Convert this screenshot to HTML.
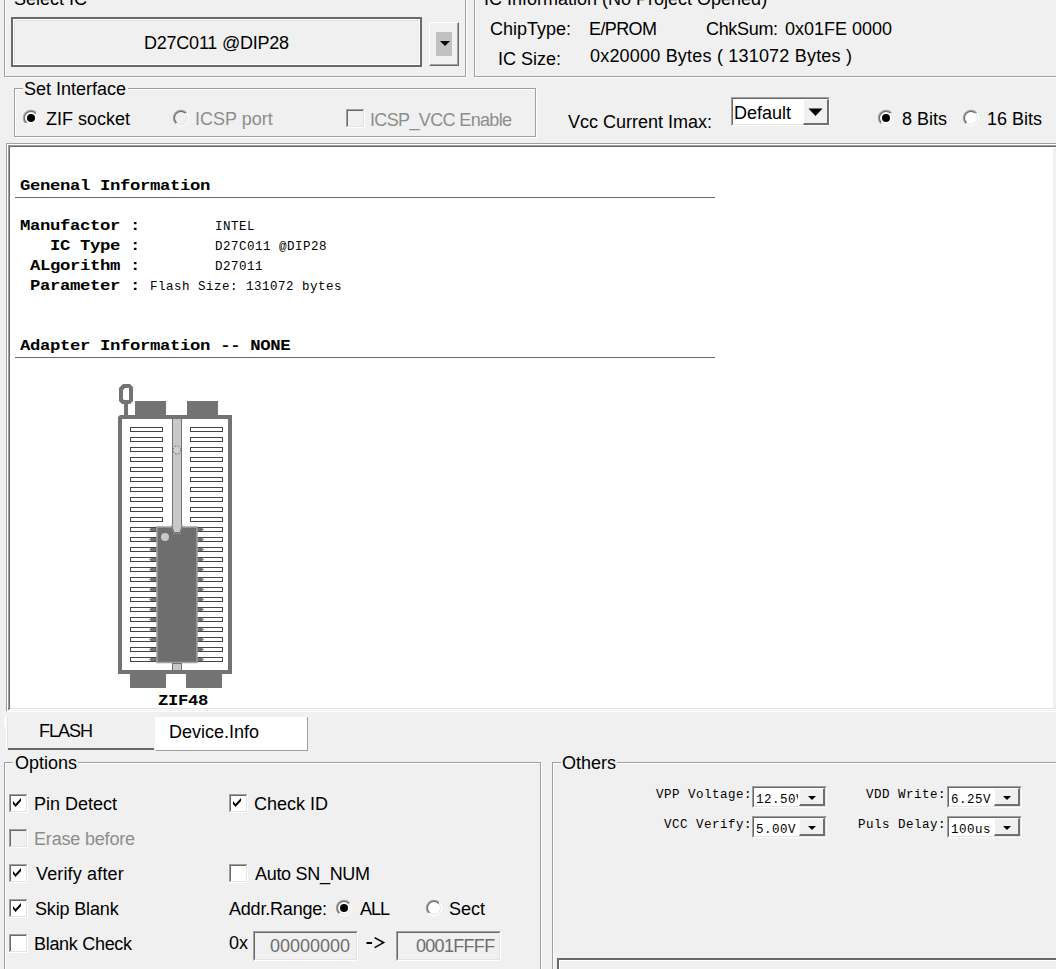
<!DOCTYPE html>
<html><head><meta charset="utf-8"><title>IC Programmer</title>
<style>
html,body{margin:0;padding:0}
html{background:#f0f0f0}
body{width:1056px;height:969px;overflow:hidden;background:#f0f0f0;position:relative;font-family:"Liberation Sans", sans-serif;font-size:17px;color:#000}
.t{position:absolute;white-space:pre;line-height:20px}
.r{position:absolute;display:block}
</style></head><body>

<div class="r" style="left:5px;top:-5px;width:462px;height:83px;border:1px solid #fff;box-sizing:border-box"></div>
<div class="r" style="left:4px;top:-6px;width:462px;height:83px;border:1px solid #a0a0a0;box-sizing:border-box"></div>
<div class="r" style="left:13px;top:-12px;width:74px;height:20px;background:#f0f0f0"></div>
<div class="t" style="left:14px;top:-11px;font-size:18px;">Select IC</div>
<div class="r" style="left:11px;top:17px;width:411px;height:50px;border:2px solid #696969;box-sizing:border-box;background:#f0f0f0"></div>
<div class="r" style="left:13px;top:19px;width:407px;height:46px;border:1px solid #fff;box-sizing:border-box"></div>
<div class="r" style="left:14px;top:20px;width:405px;height:44px;border-left:1px solid #e3e3e3;border-top:1px solid #e3e3e3;box-sizing:border-box"></div>
<div class="t" style="left:144px;top:33px;font-size:18px;letter-spacing:-0.23px;">D27C011 @DIP28</div>
<div class="r" style="left:429px;top:22px;width:30px;height:44px;background:#f0f0f0;border-left:1px solid #fff;border-top:1px solid #fff;border-right:1px solid #696969;border-bottom:1px solid #696969;box-sizing:border-box"></div>
<div class="r" style="left:430px;top:23px;width:28px;height:42px;border-right:1px solid #a0a0a0;border-bottom:1px solid #a0a0a0;box-sizing:border-box"></div>
<div class="r" style="left:436px;top:32px;width:16px;height:24px;background:#c0c0c0"></div>
<svg class="r" style="left:439px;top:40px" width="12" height="7"><path d="M1 1 H11 L6 6 Z" fill="#000"/></svg>
<div class="r" style="left:475px;top:-5px;width:596px;height:83px;border:1px solid #fff;box-sizing:border-box"></div>
<div class="r" style="left:474px;top:-6px;width:596px;height:83px;border:1px solid #a0a0a0;box-sizing:border-box"></div>
<div class="r" style="left:483px;top:-12px;width:288px;height:20px;background:#f0f0f0"></div>
<div class="t" style="left:484px;top:-11px;font-size:18px;">IC Information (No Project Opened)</div>
<div class="t" style="left:490px;top:19px;font-size:18px;">ChipType:</div>
<div class="t" style="left:589px;top:19px;font-size:18px;letter-spacing:-0.6px;">E/PROM</div>
<div class="t" style="left:706px;top:19px;font-size:18px;letter-spacing:-0.33px;">ChkSum:</div>
<div class="t" style="left:785px;top:19px;font-size:18px;">0x01FE 0000</div>
<div class="t" style="left:498px;top:49px;font-size:18px;">IC Size:</div>
<div class="t" style="left:590px;top:46px;font-size:18px;letter-spacing:0.2px;">0x20000 Bytes ( 131072 Bytes )</div>
<div class="r" style="left:15px;top:89px;width:522px;height:49px;border:1px solid #fff;box-sizing:border-box"></div>
<div class="r" style="left:14px;top:88px;width:522px;height:49px;border:1px solid #a0a0a0;box-sizing:border-box"></div>
<div class="r" style="left:23px;top:80px;width:105px;height:20px;background:#f0f0f0"></div>
<div class="t" style="left:24px;top:79px;font-size:18px;">Set Interface</div>
<svg class="r" style="left:22px;top:109px" width="18" height="18"><defs><linearGradient id="g31118" x1="0" y1="0" x2="1" y2="1"><stop offset="0.5" stop-color="#a0a0a0"/><stop offset="0.5" stop-color="#fff"/></linearGradient><linearGradient id="h31118" x1="0" y1="0" x2="1" y2="1"><stop offset="0.5" stop-color="#696969"/><stop offset="0.5" stop-color="#e3e3e3"/></linearGradient></defs><circle cx="9" cy="9" r="8.2" fill="url(#g31118)"/><circle cx="9" cy="9" r="7" fill="url(#h31118)"/><circle cx="9" cy="9" r="6" fill="#fff"/><circle cx="9" cy="9" r="4" fill="#000"/></svg>
<div class="t" style="left:46px;top:109px;font-size:18px;">ZIF socket</div>
<svg class="r" style="left:172px;top:109px" width="18" height="18"><defs><linearGradient id="g181118" x1="0" y1="0" x2="1" y2="1"><stop offset="0.5" stop-color="#a0a0a0"/><stop offset="0.5" stop-color="#fff"/></linearGradient><linearGradient id="h181118" x1="0" y1="0" x2="1" y2="1"><stop offset="0.5" stop-color="#696969"/><stop offset="0.5" stop-color="#e3e3e3"/></linearGradient></defs><circle cx="9" cy="9" r="8.2" fill="url(#g181118)"/><circle cx="9" cy="9" r="7" fill="url(#h181118)"/><circle cx="9" cy="9" r="6" fill="#f0f0f0"/></svg>
<div class="t" style="left:195px;top:109px;font-size:18px;color:#8d8d8d;">ICSP port</div>
<svg class="r" style="left:346px;top:109px" width="19" height="19" shape-rendering="crispEdges"><rect x="0" y="0" width="19" height="19" fill="#fff"/><rect x="0" y="0" width="18" height="18" fill="#a0a0a0"/><rect x="1" y="1" width="17" height="17" fill="#e3e3e3"/><rect x="1" y="1" width="16" height="16" fill="#696969"/><rect x="2" y="2" width="15" height="15" fill="#f0f0f0"/></svg>
<div class="t" style="left:370px;top:110px;font-size:18px;color:#8d8d8d;letter-spacing:-0.64px;">ICSP_VCC Enable</div>
<div class="t" style="left:568px;top:112px;font-size:18px;">Vcc Current Imax:</div>
<div class="r" style="left:731px;top:97px;width:99px;height:29px;background:#fff;border-left:1px solid #a0a0a0;border-top:1px solid #a0a0a0;border-right:1px solid #fff;border-bottom:1px solid #fff;box-sizing:border-box"></div>
<div class="r" style="left:732px;top:98px;width:97px;height:27px;border-left:1px solid #696969;border-top:1px solid #696969;border-right:1px solid #e3e3e3;border-bottom:1px solid #e3e3e3;box-sizing:border-box"></div>
<div class="r" style="left:803px;top:99px;width:26px;height:26px;background:#f0f0f0;border-left:1px solid #fff;border-top:1px solid #fff;border-right:2px solid #707070;border-bottom:2px solid #707070;box-sizing:border-box"></div>
<svg class="r" style="left:808px;top:108px" width="15" height="9"><path d="M0.5 0.5 H14.5 L7.5 8 Z" fill="#000"/></svg>
<div class="t" style="left:734px;top:103px;font-size:18px;">Default</div>
<svg class="r" style="left:877px;top:109px" width="18" height="18"><defs><linearGradient id="g886118" x1="0" y1="0" x2="1" y2="1"><stop offset="0.5" stop-color="#a0a0a0"/><stop offset="0.5" stop-color="#fff"/></linearGradient><linearGradient id="h886118" x1="0" y1="0" x2="1" y2="1"><stop offset="0.5" stop-color="#696969"/><stop offset="0.5" stop-color="#e3e3e3"/></linearGradient></defs><circle cx="9" cy="9" r="8.2" fill="url(#g886118)"/><circle cx="9" cy="9" r="7" fill="url(#h886118)"/><circle cx="9" cy="9" r="6" fill="#fff"/><circle cx="9" cy="9" r="4" fill="#000"/></svg>
<div class="t" style="left:902px;top:109px;font-size:18px;">8 Bits</div>
<svg class="r" style="left:962px;top:109px" width="18" height="18"><defs><linearGradient id="g971118" x1="0" y1="0" x2="1" y2="1"><stop offset="0.5" stop-color="#a0a0a0"/><stop offset="0.5" stop-color="#fff"/></linearGradient><linearGradient id="h971118" x1="0" y1="0" x2="1" y2="1"><stop offset="0.5" stop-color="#696969"/><stop offset="0.5" stop-color="#e3e3e3"/></linearGradient></defs><circle cx="9" cy="9" r="8.2" fill="url(#g971118)"/><circle cx="9" cy="9" r="7" fill="url(#h971118)"/><circle cx="9" cy="9" r="6" fill="#fff"/></svg>
<div class="t" style="left:987px;top:109px;font-size:18px;">16 Bits</div>
<div class="r" style="left:6px;top:143px;width:1060px;height:569px;border-left:1px solid #a0a0a0;border-top:1px solid #a0a0a0;border-bottom:1px solid #fff;box-sizing:border-box"></div>
<div class="r" style="left:8px;top:145px;width:1060px;height:565px;background:#fff;border-left:2px solid #696969;border-top:2px solid #696969;border-bottom:1px solid #fff;box-sizing:border-box"></div>
<div class="r" style="left:10px;top:708px;width:1060px;height:1px;background:#e3e3e3"></div>
<div class="r" style="left:7px;top:144px;width:1060px;height:1px;background:#fff"></div>
<div class="r" style="left:7px;top:144px;width:1px;height:566px;background:#fff"></div>
<div class="r" style="left:8px;top:145px;width:1060px;height:1px;background:#a0a0a0"></div>
<div class="r" style="left:8px;top:145px;width:1px;height:563px;background:#a0a0a0"></div>
<div class="r" style="left:1053px;top:148px;width:10px;height:560px;background:#f0f0f0"></div>
<div class="t" style="left:20px;top:177px;font-size:15px;font-family:'Liberation Mono', monospace;font-weight:700;letter-spacing:-0.3px;transform:scaleX(1.15);transform-origin:0 0">Genenal Information</div>
<div class="r" style="left:15px;top:197px;width:700px;height:1px;background:#696969"></div>
<div class="t" style="left:20px;top:217px;font-size:15px;font-family:'Liberation Mono', monospace;font-weight:700;letter-spacing:-0.3px;transform:scaleX(1.15);transform-origin:0 0">Manufactor :</div>
<div class="t" style="left:20px;top:237px;font-size:15px;font-family:'Liberation Mono', monospace;font-weight:700;letter-spacing:-0.3px;transform:scaleX(1.15);transform-origin:0 0">   IC Type :</div>
<div class="t" style="left:20px;top:257px;font-size:15px;font-family:'Liberation Mono', monospace;font-weight:700;letter-spacing:-0.3px;transform:scaleX(1.15);transform-origin:0 0"> ALgorithm :</div>
<div class="t" style="left:20px;top:277px;font-size:15px;font-family:'Liberation Mono', monospace;font-weight:700;letter-spacing:-0.3px;transform:scaleX(1.15);transform-origin:0 0"> Parameter :</div>
<div class="t" style="left:215px;top:216.5px;font-size:12.5px;font-family:'Liberation Mono', monospace;letter-spacing:0.5px;">INTEL</div>
<div class="t" style="left:215px;top:236.5px;font-size:12.5px;font-family:'Liberation Mono', monospace;letter-spacing:0.5px;">D27C011 @DIP28</div>
<div class="t" style="left:215px;top:256.5px;font-size:12.5px;font-family:'Liberation Mono', monospace;letter-spacing:0.5px;">D27011</div>
<div class="t" style="left:150px;top:276.5px;font-size:12.5px;font-family:'Liberation Mono', monospace;letter-spacing:0.5px;">Flash Size: 131072 bytes</div>
<div class="t" style="left:20px;top:337px;font-size:15px;font-family:'Liberation Mono', monospace;font-weight:700;letter-spacing:-0.3px;transform:scaleX(1.15);transform-origin:0 0">Adapter Information -- NONE</div>
<div class="r" style="left:15px;top:357px;width:700px;height:1px;background:#696969"></div>
<svg class="r" style="left:110px;top:380px" width="130" height="312" viewBox="110 380 130 312"><path fill-rule="evenodd" fill="#737373" d="M123 384 H130 L133 387 V401 L130 404 H122 L119 401 V388 Z M125 388 H129 V400 H124 L123 399 V390 Z"/><rect x="124" y="403" width="4" height="13" fill="#737373"/><rect x="135" y="401" width="31" height="15" fill="#737373"/><rect x="187" y="401" width="31" height="15" fill="#737373"/><path fill-rule="evenodd" fill="#737373" d="M120 415 H232 V674 H118 V417 Z M122 419 V670 H228 V419 Z"/><rect x="122" y="419" width="106" height="251" fill="#fff"/><rect x="130" y="674" width="36" height="14" fill="#737373"/><rect x="186" y="674" width="36" height="14" fill="#737373"/><rect x="172.5" y="418.5" width="9" height="252" fill="#c8c8c8" stroke="#737373" stroke-width="1"/><circle cx="177" cy="450" r="4" fill="#d0d0d0" stroke="#606060" stroke-width="1" stroke-dasharray="1.6 1.6"/><rect x="130.5" y="427.5" width="32" height="4" fill="#fff" stroke="#444" stroke-width="1"/><rect x="190.5" y="427.5" width="32" height="4" fill="#fff" stroke="#444" stroke-width="1"/><rect x="130.5" y="437.5" width="32" height="4" fill="#fff" stroke="#444" stroke-width="1"/><rect x="190.5" y="437.5" width="32" height="4" fill="#fff" stroke="#444" stroke-width="1"/><rect x="130.5" y="447.5" width="32" height="4" fill="#fff" stroke="#444" stroke-width="1"/><rect x="190.5" y="447.5" width="32" height="4" fill="#fff" stroke="#444" stroke-width="1"/><rect x="130.5" y="457.5" width="32" height="4" fill="#fff" stroke="#444" stroke-width="1"/><rect x="190.5" y="457.5" width="32" height="4" fill="#fff" stroke="#444" stroke-width="1"/><rect x="130.5" y="467.5" width="32" height="4" fill="#fff" stroke="#444" stroke-width="1"/><rect x="190.5" y="467.5" width="32" height="4" fill="#fff" stroke="#444" stroke-width="1"/><rect x="130.5" y="477.5" width="32" height="4" fill="#fff" stroke="#444" stroke-width="1"/><rect x="190.5" y="477.5" width="32" height="4" fill="#fff" stroke="#444" stroke-width="1"/><rect x="130.5" y="487.5" width="32" height="4" fill="#fff" stroke="#444" stroke-width="1"/><rect x="190.5" y="487.5" width="32" height="4" fill="#fff" stroke="#444" stroke-width="1"/><rect x="130.5" y="497.5" width="32" height="4" fill="#fff" stroke="#444" stroke-width="1"/><rect x="190.5" y="497.5" width="32" height="4" fill="#fff" stroke="#444" stroke-width="1"/><rect x="130.5" y="507.5" width="32" height="4" fill="#fff" stroke="#444" stroke-width="1"/><rect x="190.5" y="507.5" width="32" height="4" fill="#fff" stroke="#444" stroke-width="1"/><rect x="130.5" y="517.5" width="32" height="4" fill="#fff" stroke="#444" stroke-width="1"/><rect x="190.5" y="517.5" width="32" height="4" fill="#fff" stroke="#444" stroke-width="1"/><rect x="130.5" y="527.5" width="32" height="4" fill="#fff" stroke="#444" stroke-width="1"/><rect x="190.5" y="527.5" width="32" height="4" fill="#fff" stroke="#444" stroke-width="1"/><rect x="130.5" y="537.5" width="32" height="4" fill="#fff" stroke="#444" stroke-width="1"/><rect x="190.5" y="537.5" width="32" height="4" fill="#fff" stroke="#444" stroke-width="1"/><rect x="130.5" y="547.5" width="32" height="4" fill="#fff" stroke="#444" stroke-width="1"/><rect x="190.5" y="547.5" width="32" height="4" fill="#fff" stroke="#444" stroke-width="1"/><rect x="130.5" y="557.5" width="32" height="4" fill="#fff" stroke="#444" stroke-width="1"/><rect x="190.5" y="557.5" width="32" height="4" fill="#fff" stroke="#444" stroke-width="1"/><rect x="130.5" y="567.5" width="32" height="4" fill="#fff" stroke="#444" stroke-width="1"/><rect x="190.5" y="567.5" width="32" height="4" fill="#fff" stroke="#444" stroke-width="1"/><rect x="130.5" y="577.5" width="32" height="4" fill="#fff" stroke="#444" stroke-width="1"/><rect x="190.5" y="577.5" width="32" height="4" fill="#fff" stroke="#444" stroke-width="1"/><rect x="130.5" y="587.5" width="32" height="4" fill="#fff" stroke="#444" stroke-width="1"/><rect x="190.5" y="587.5" width="32" height="4" fill="#fff" stroke="#444" stroke-width="1"/><rect x="130.5" y="597.5" width="32" height="4" fill="#fff" stroke="#444" stroke-width="1"/><rect x="190.5" y="597.5" width="32" height="4" fill="#fff" stroke="#444" stroke-width="1"/><rect x="130.5" y="607.5" width="32" height="4" fill="#fff" stroke="#444" stroke-width="1"/><rect x="190.5" y="607.5" width="32" height="4" fill="#fff" stroke="#444" stroke-width="1"/><rect x="130.5" y="617.5" width="32" height="4" fill="#fff" stroke="#444" stroke-width="1"/><rect x="190.5" y="617.5" width="32" height="4" fill="#fff" stroke="#444" stroke-width="1"/><rect x="130.5" y="627.5" width="32" height="4" fill="#fff" stroke="#444" stroke-width="1"/><rect x="190.5" y="627.5" width="32" height="4" fill="#fff" stroke="#444" stroke-width="1"/><rect x="130.5" y="637.5" width="32" height="4" fill="#fff" stroke="#444" stroke-width="1"/><rect x="190.5" y="637.5" width="32" height="4" fill="#fff" stroke="#444" stroke-width="1"/><rect x="130.5" y="647.5" width="32" height="4" fill="#fff" stroke="#444" stroke-width="1"/><rect x="190.5" y="647.5" width="32" height="4" fill="#fff" stroke="#444" stroke-width="1"/><rect x="130.5" y="657.5" width="32" height="4" fill="#fff" stroke="#444" stroke-width="1"/><rect x="190.5" y="657.5" width="32" height="4" fill="#fff" stroke="#444" stroke-width="1"/><path d="M151 528 H157 V531 H151 L149 529.5 Z" fill="#737373"/><path d="M197 528 H202 L204 529.5 L202 531 H197 Z" fill="#737373"/><path d="M151 538 H157 V541 H151 L149 539.5 Z" fill="#737373"/><path d="M197 538 H202 L204 539.5 L202 541 H197 Z" fill="#737373"/><path d="M151 548 H157 V551 H151 L149 549.5 Z" fill="#737373"/><path d="M197 548 H202 L204 549.5 L202 551 H197 Z" fill="#737373"/><path d="M151 558 H157 V561 H151 L149 559.5 Z" fill="#737373"/><path d="M197 558 H202 L204 559.5 L202 561 H197 Z" fill="#737373"/><path d="M151 568 H157 V571 H151 L149 569.5 Z" fill="#737373"/><path d="M197 568 H202 L204 569.5 L202 571 H197 Z" fill="#737373"/><path d="M151 578 H157 V581 H151 L149 579.5 Z" fill="#737373"/><path d="M197 578 H202 L204 579.5 L202 581 H197 Z" fill="#737373"/><path d="M151 588 H157 V591 H151 L149 589.5 Z" fill="#737373"/><path d="M197 588 H202 L204 589.5 L202 591 H197 Z" fill="#737373"/><path d="M151 598 H157 V601 H151 L149 599.5 Z" fill="#737373"/><path d="M197 598 H202 L204 599.5 L202 601 H197 Z" fill="#737373"/><path d="M151 608 H157 V611 H151 L149 609.5 Z" fill="#737373"/><path d="M197 608 H202 L204 609.5 L202 611 H197 Z" fill="#737373"/><path d="M151 618 H157 V621 H151 L149 619.5 Z" fill="#737373"/><path d="M197 618 H202 L204 619.5 L202 621 H197 Z" fill="#737373"/><path d="M151 628 H157 V631 H151 L149 629.5 Z" fill="#737373"/><path d="M197 628 H202 L204 629.5 L202 631 H197 Z" fill="#737373"/><path d="M151 638 H157 V641 H151 L149 639.5 Z" fill="#737373"/><path d="M197 638 H202 L204 639.5 L202 641 H197 Z" fill="#737373"/><path d="M151 648 H157 V651 H151 L149 649.5 Z" fill="#737373"/><path d="M197 648 H202 L204 649.5 L202 651 H197 Z" fill="#737373"/><path d="M151 658 H157 V661 H151 L149 659.5 Z" fill="#737373"/><path d="M197 658 H202 L204 659.5 L202 661 H197 Z" fill="#737373"/><rect x="157" y="527" width="40" height="135.5" fill="#6e6e6e" stroke="#a0a0a0" stroke-width="1.5"/><path d="M171 526 L173 531.5 V533.5 H181 V531.5 L183 526" fill="#a0a0a0"/><path d="M172 525 V526 L173.5 531 V532.5 H180.5 V531 L182 526 V525" fill="#c8c8c8" stroke="#737373" stroke-width="1"/><circle cx="165" cy="537" r="4" fill="#c8c8c8"/><rect x="172.5" y="663.5" width="9" height="7" fill="#c8c8c8" stroke="#737373" stroke-width="1"/></svg>
<div class="t" style="left:158px;top:692px;font-size:15px;font-family:'Liberation Mono', monospace;font-weight:700;letter-spacing:-0.3px;transform:scaleX(1.15);transform-origin:0 0">ZIF48</div>
<div class="r" style="left:4px;top:711px;width:1060px;height:1px;background:#fff"></div>
<div class="r" style="left:4px;top:717px;width:2px;height:10px;background:#fff"></div>
<div class="r" style="left:6px;top:717px;width:1px;height:31px;background:#fff"></div>
<div class="r" style="left:7px;top:717px;width:1px;height:31px;background:#e3e3e3"></div>
<div class="r" style="left:8px;top:748px;width:146px;height:2px;background:#696969"></div>
<div class="t" style="left:39px;top:721px;font-size:18px;letter-spacing:-1px;">FLASH</div>
<div class="r" style="left:155px;top:717px;width:153px;height:34px;background:#fff;border-left:1px solid #fff;border-right:1px solid #a0a0a0;border-bottom:1px solid #a0a0a0;box-sizing:border-box"></div>
<div class="t" style="left:169px;top:722px;font-size:18px;">Device.Info</div>
<div class="r" style="left:5px;top:763px;width:537px;height:218px;border:1px solid #fff;box-sizing:border-box"></div>
<div class="r" style="left:4px;top:762px;width:537px;height:218px;border:1px solid #a0a0a0;box-sizing:border-box"></div>
<div class="r" style="left:13px;top:752px;width:65px;height:20px;background:#f0f0f0"></div>
<div class="t" style="left:15px;top:753px;font-size:18px;">Options</div>
<svg class="r" style="left:9px;top:794px" width="19" height="19" shape-rendering="crispEdges"><rect x="0" y="0" width="19" height="19" fill="#fff"/><rect x="0" y="0" width="18" height="18" fill="#a0a0a0"/><rect x="1" y="1" width="17" height="17" fill="#e3e3e3"/><rect x="1" y="1" width="16" height="16" fill="#696969"/><rect x="2" y="2" width="15" height="15" fill="#fff"/><path d="M4 7 L6.5 10 L12 4 L12 7 L6.5 13 L4 10 Z" fill="#000" shape-rendering="auto"/></svg>
<div class="t" style="left:34px;top:794px;font-size:18px;">Pin Detect</div>
<svg class="r" style="left:9px;top:829px" width="19" height="19" shape-rendering="crispEdges"><rect x="0" y="0" width="19" height="19" fill="#fff"/><rect x="0" y="0" width="18" height="18" fill="#a0a0a0"/><rect x="1" y="1" width="17" height="17" fill="#e3e3e3"/><rect x="1" y="1" width="16" height="16" fill="#696969"/><rect x="2" y="2" width="15" height="15" fill="#f0f0f0"/></svg>
<div class="t" style="left:34px;top:829px;font-size:18px;color:#8d8d8d;letter-spacing:-0.18px;">Erase before</div>
<svg class="r" style="left:9px;top:864px" width="19" height="19" shape-rendering="crispEdges"><rect x="0" y="0" width="19" height="19" fill="#fff"/><rect x="0" y="0" width="18" height="18" fill="#a0a0a0"/><rect x="1" y="1" width="17" height="17" fill="#e3e3e3"/><rect x="1" y="1" width="16" height="16" fill="#696969"/><rect x="2" y="2" width="15" height="15" fill="#fff"/><path d="M4 7 L6.5 10 L12 4 L12 7 L6.5 13 L4 10 Z" fill="#000" shape-rendering="auto"/></svg>
<div class="t" style="left:36px;top:864px;font-size:18px;letter-spacing:0.15px;">Verify after</div>
<svg class="r" style="left:9px;top:899px" width="19" height="19" shape-rendering="crispEdges"><rect x="0" y="0" width="19" height="19" fill="#fff"/><rect x="0" y="0" width="18" height="18" fill="#a0a0a0"/><rect x="1" y="1" width="17" height="17" fill="#e3e3e3"/><rect x="1" y="1" width="16" height="16" fill="#696969"/><rect x="2" y="2" width="15" height="15" fill="#fff"/><path d="M4 7 L6.5 10 L12 4 L12 7 L6.5 13 L4 10 Z" fill="#000" shape-rendering="auto"/></svg>
<div class="t" style="left:35px;top:899px;font-size:18px;letter-spacing:-0.15px;">Skip Blank</div>
<svg class="r" style="left:9px;top:934px" width="19" height="19" shape-rendering="crispEdges"><rect x="0" y="0" width="19" height="19" fill="#fff"/><rect x="0" y="0" width="18" height="18" fill="#a0a0a0"/><rect x="1" y="1" width="17" height="17" fill="#e3e3e3"/><rect x="1" y="1" width="16" height="16" fill="#696969"/><rect x="2" y="2" width="15" height="15" fill="#fff"/></svg>
<div class="t" style="left:34px;top:934px;font-size:18px;letter-spacing:-0.3px;">Blank Check</div>
<svg class="r" style="left:229px;top:794px" width="19" height="19" shape-rendering="crispEdges"><rect x="0" y="0" width="19" height="19" fill="#fff"/><rect x="0" y="0" width="18" height="18" fill="#a0a0a0"/><rect x="1" y="1" width="17" height="17" fill="#e3e3e3"/><rect x="1" y="1" width="16" height="16" fill="#696969"/><rect x="2" y="2" width="15" height="15" fill="#fff"/><path d="M4 7 L6.5 10 L12 4 L12 7 L6.5 13 L4 10 Z" fill="#000" shape-rendering="auto"/></svg>
<div class="t" style="left:254px;top:794px;font-size:18px;">Check ID</div>
<svg class="r" style="left:229px;top:864px" width="19" height="19" shape-rendering="crispEdges"><rect x="0" y="0" width="19" height="19" fill="#fff"/><rect x="0" y="0" width="18" height="18" fill="#a0a0a0"/><rect x="1" y="1" width="17" height="17" fill="#e3e3e3"/><rect x="1" y="1" width="16" height="16" fill="#696969"/><rect x="2" y="2" width="15" height="15" fill="#fff"/></svg>
<div class="t" style="left:255px;top:864px;font-size:18px;letter-spacing:-0.3px;">Auto SN_NUM</div>
<div class="t" style="left:229px;top:899px;font-size:18px;letter-spacing:-0.2px;">Addr.Range:</div>
<svg class="r" style="left:335px;top:899px" width="18" height="18"><defs><linearGradient id="g344908" x1="0" y1="0" x2="1" y2="1"><stop offset="0.5" stop-color="#a0a0a0"/><stop offset="0.5" stop-color="#fff"/></linearGradient><linearGradient id="h344908" x1="0" y1="0" x2="1" y2="1"><stop offset="0.5" stop-color="#696969"/><stop offset="0.5" stop-color="#e3e3e3"/></linearGradient></defs><circle cx="9" cy="9" r="8.2" fill="url(#g344908)"/><circle cx="9" cy="9" r="7" fill="url(#h344908)"/><circle cx="9" cy="9" r="6" fill="#fff"/><circle cx="9" cy="9" r="4" fill="#000"/></svg>
<div class="t" style="left:360px;top:899px;font-size:18px;letter-spacing:-1px;">ALL</div>
<svg class="r" style="left:425px;top:899px" width="18" height="18"><defs><linearGradient id="g434908" x1="0" y1="0" x2="1" y2="1"><stop offset="0.5" stop-color="#a0a0a0"/><stop offset="0.5" stop-color="#fff"/></linearGradient><linearGradient id="h434908" x1="0" y1="0" x2="1" y2="1"><stop offset="0.5" stop-color="#696969"/><stop offset="0.5" stop-color="#e3e3e3"/></linearGradient></defs><circle cx="9" cy="9" r="8.2" fill="url(#g434908)"/><circle cx="9" cy="9" r="7" fill="url(#h434908)"/><circle cx="9" cy="9" r="6" fill="#fff"/></svg>
<div class="t" style="left:449px;top:899px;font-size:18px;">Sect</div>
<div class="t" style="left:229px;top:933px;font-size:18px;">0x</div>
<div class="r" style="left:253px;top:931px;width:105px;height:30px;background:#f0f0f0;border-left:1px solid #a0a0a0;border-top:1px solid #a0a0a0;border-right:1px solid #fff;border-bottom:1px solid #fff;box-sizing:border-box"></div>
<div class="r" style="left:254px;top:932px;width:103px;height:28px;border-left:1px solid #696969;border-top:1px solid #696969;border-right:1px solid #e3e3e3;border-bottom:1px solid #e3e3e3;box-sizing:border-box"></div>
<div class="t" style="left:270px;top:936px;font-size:18px;color:#6d6d6d;">00000000</div>
<svg class="r" style="left:364px;top:934px" width="24" height="18"><rect x="2.5" y="8" width="5.5" height="2" fill="#000"/><path d="M10.6 3.6 L19.6 8.6 L10.6 13.6" fill="none" stroke="#000" stroke-width="1.6"/></svg>
<div class="r" style="left:396px;top:931px;width:105px;height:30px;background:#f0f0f0;border-left:1px solid #a0a0a0;border-top:1px solid #a0a0a0;border-right:1px solid #fff;border-bottom:1px solid #fff;box-sizing:border-box"></div>
<div class="r" style="left:397px;top:932px;width:103px;height:28px;border-left:1px solid #696969;border-top:1px solid #696969;border-right:1px solid #e3e3e3;border-bottom:1px solid #e3e3e3;box-sizing:border-box"></div>
<div class="t" style="left:416px;top:936px;font-size:18px;color:#6d6d6d;letter-spacing:-0.7px;">0001FFFF</div>
<div class="r" style="left:553px;top:763px;width:518px;height:218px;border:1px solid #fff;box-sizing:border-box"></div>
<div class="r" style="left:552px;top:762px;width:518px;height:218px;border:1px solid #a0a0a0;box-sizing:border-box"></div>
<div class="r" style="left:561px;top:752px;width:56px;height:20px;background:#f0f0f0"></div>
<div class="t" style="left:562px;top:753px;font-size:18px;">Others</div>
<div class="t" style="left:656px;top:785px;font-size:12.5px;font-family:'Liberation Mono', monospace;letter-spacing:0.5px;">VPP Voltage:</div>
<div class="r" style="left:752px;top:786px;width:75px;height:22px;background:#fff;border-left:1px solid #a0a0a0;border-top:1px solid #a0a0a0;border-right:1px solid #fff;border-bottom:1px solid #fff;box-sizing:border-box"></div>
<div class="r" style="left:753px;top:787px;width:73px;height:20px;border-left:1px solid #696969;border-top:1px solid #696969;border-right:1px solid #e3e3e3;border-bottom:1px solid #e3e3e3;box-sizing:border-box"></div>
<div class="r" style="left:799px;top:788px;width:26px;height:18px;background:#f0f0f0;border-left:1px solid #fff;border-top:1px solid #fff;border-right:2px solid #707070;border-bottom:2px solid #707070;box-sizing:border-box"></div>
<svg class="r" style="left:808px;top:796px" width="8" height="4"><path d="M0 0 H8 L4 4 Z" fill="#000"/></svg>
<div class="t" style="left:756px;top:789.5px;font-size:12.5px;font-family:'Liberation Mono', monospace;letter-spacing:0.5px;width:42px;overflow:hidden">12.50V</div>
<div class="t" style="left:664px;top:815px;font-size:12.5px;font-family:'Liberation Mono', monospace;letter-spacing:0.5px;">VCC Verify:</div>
<div class="r" style="left:752px;top:816px;width:75px;height:22px;background:#fff;border-left:1px solid #a0a0a0;border-top:1px solid #a0a0a0;border-right:1px solid #fff;border-bottom:1px solid #fff;box-sizing:border-box"></div>
<div class="r" style="left:753px;top:817px;width:73px;height:20px;border-left:1px solid #696969;border-top:1px solid #696969;border-right:1px solid #e3e3e3;border-bottom:1px solid #e3e3e3;box-sizing:border-box"></div>
<div class="r" style="left:799px;top:818px;width:26px;height:18px;background:#f0f0f0;border-left:1px solid #fff;border-top:1px solid #fff;border-right:2px solid #707070;border-bottom:2px solid #707070;box-sizing:border-box"></div>
<svg class="r" style="left:808px;top:826px" width="8" height="4"><path d="M0 0 H8 L4 4 Z" fill="#000"/></svg>
<div class="t" style="left:756px;top:819.5px;font-size:12.5px;font-family:'Liberation Mono', monospace;letter-spacing:0.5px;width:42px;overflow:hidden">5.00V</div>
<div class="t" style="left:866px;top:785px;font-size:12.5px;font-family:'Liberation Mono', monospace;letter-spacing:0.5px;">VDD Write:</div>
<div class="r" style="left:947px;top:786px;width:75px;height:22px;background:#fff;border-left:1px solid #a0a0a0;border-top:1px solid #a0a0a0;border-right:1px solid #fff;border-bottom:1px solid #fff;box-sizing:border-box"></div>
<div class="r" style="left:948px;top:787px;width:73px;height:20px;border-left:1px solid #696969;border-top:1px solid #696969;border-right:1px solid #e3e3e3;border-bottom:1px solid #e3e3e3;box-sizing:border-box"></div>
<div class="r" style="left:994px;top:788px;width:26px;height:18px;background:#f0f0f0;border-left:1px solid #fff;border-top:1px solid #fff;border-right:2px solid #707070;border-bottom:2px solid #707070;box-sizing:border-box"></div>
<svg class="r" style="left:1003px;top:796px" width="8" height="4"><path d="M0 0 H8 L4 4 Z" fill="#000"/></svg>
<div class="t" style="left:951px;top:789.5px;font-size:12.5px;font-family:'Liberation Mono', monospace;letter-spacing:0.5px;width:42px;overflow:hidden">6.25V</div>
<div class="t" style="left:858px;top:815px;font-size:12.5px;font-family:'Liberation Mono', monospace;letter-spacing:0.5px;">Puls Delay:</div>
<div class="r" style="left:947px;top:816px;width:75px;height:22px;background:#fff;border-left:1px solid #a0a0a0;border-top:1px solid #a0a0a0;border-right:1px solid #fff;border-bottom:1px solid #fff;box-sizing:border-box"></div>
<div class="r" style="left:948px;top:817px;width:73px;height:20px;border-left:1px solid #696969;border-top:1px solid #696969;border-right:1px solid #e3e3e3;border-bottom:1px solid #e3e3e3;box-sizing:border-box"></div>
<div class="r" style="left:994px;top:818px;width:26px;height:18px;background:#f0f0f0;border-left:1px solid #fff;border-top:1px solid #fff;border-right:2px solid #707070;border-bottom:2px solid #707070;box-sizing:border-box"></div>
<svg class="r" style="left:1003px;top:826px" width="8" height="4"><path d="M0 0 H8 L4 4 Z" fill="#000"/></svg>
<div class="t" style="left:951px;top:819.5px;font-size:12.5px;font-family:'Liberation Mono', monospace;letter-spacing:0.5px;width:42px;overflow:hidden">100us</div>
<div class="r" style="left:557px;top:958px;width:520px;height:30px;background:#f0f0f0;border-left:2px solid #696969;border-top:2px solid #696969;box-sizing:border-box"></div>
<div class="r" style="left:559px;top:960px;width:520px;height:30px;border-left:1px solid #fff;border-top:1px solid #fff;box-sizing:border-box"></div>
</body></html>
